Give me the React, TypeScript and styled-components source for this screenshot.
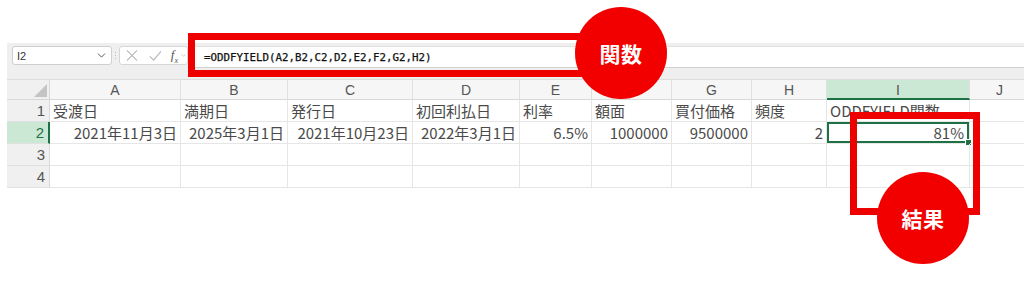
import React from "react";
import styled, { createGlobalStyle } from "styled-components";
import { ChevronDown } from "lucide-react";

const Global = createGlobalStyle`
  html, body { margin: 0; padding: 0; background: #fff; }
  body { font-family: "Noto Sans CJK JP", "Noto Sans", sans-serif; width: 1024px; height: 284px; overflow: hidden; }
`;

const Page = styled.div`
  position: relative;
  width: 1024px;
  height: 284px;
  padding: 43px 0 0 7px;
  box-sizing: border-box;
`;

const FormulaBand = styled.div`
  height: 37px;
  background: #efefef;
  display: flex;
  align-items: flex-start;
  padding: 3px 0 0 5px;
  box-sizing: border-box;
  gap: 3px;
  border-bottom: 1px solid #dcdcdc;
`;

const NameBox = styled.div`
  width: 100px;
  height: 19px;
  box-sizing: border-box;
  background: #fff;
  border: 1px solid #cfcfcf;
  border-radius: 3px;
  display: flex;
  align-items: center;
  justify-content: space-between;
  padding: 0 3px 0 4px;
  font-family: "Liberation Sans", sans-serif;
  font-size: 11px;
  color: #333;
`;

const Dots = styled.div`
  width: 1px;
  height: 19px;
  display: flex;
  flex-direction: column;
  justify-content: center;
  gap: 2px;
  & > span { width: 1px; height: 1px; background: #bbb; }
`;

const IconBox = styled.div`
  width: 69px;
  height: 19px;
  box-sizing: border-box;
  background: #fff;
  border: 1px solid #d6d6d6;
  border-radius: 3px;
  display: flex;
  align-items: center;
  padding: 0 0 0 6px;
  gap: 11px;
  color: #b4b4b4;
`;

const Fx = styled.span`
  font-family: "Liberation Serif", serif;
  font-style: italic;
  font-size: 13px;
  color: #555;
  display: flex;
  align-items: center;
  gap: 2px;
  margin-left: -2px;
  sub { font-size: 8px; }
`;

const FormulaInput = styled.div`
  flex: 1;
  height: 20px;
  background: #fff;
  border-top: 1px solid #e2e2e2;
  border-bottom: 1px solid #d0d0d0;
  margin-left: 3px;
  display: flex;
  align-items: center;
  padding-left: 10px;
  font-family: "DejaVu Sans Mono", monospace;
  font-size: 10.8px;
  font-weight: 400;
  color: #111;
  -webkit-text-stroke: 0.25px #111;
`;

const cols = [43, 131, 107, 125, 107, 72, 80, 80, 75, 143, 60];

const Sheet = styled.div`
  display: grid;
  grid-template-columns: ${cols.map((c) => `${c}px`).join(" ")};
  grid-template-rows: 20px 22px 22px 22px 22px;
`;

const Corner = styled.div`
  background: #f0f0f0;
  border-right: 1px solid #d8d8d8;
  border-bottom: 1px solid #d8d8d8;
  position: relative;
  &::after {
    content: "";
    position: absolute;
    right: 2px;
    bottom: 2px;
    width: 0;
    height: 0;
    border-left: 13px solid transparent;
    border-bottom: 13px solid #c4c4c4;
  }
`;

const ColHead = styled.div<{ $active?: boolean }>`
  background: ${(p) => (p.$active ? "#cbe8d5" : "#f6f6f6")};
  border-right: 1px solid #e0e0e0;
  border-bottom: ${(p) => (p.$active ? "2px solid #1e7145" : "1px solid #d8d8d8")};
  box-sizing: border-box;
  display: flex;
  align-items: center;
  justify-content: center;
  font-family: "Liberation Sans", sans-serif;
  font-size: 14px;
  color: #555;
  padding-top: 1px;
`;

const RowHead = styled.div<{ $active?: boolean }>`
  background: ${(p) => (p.$active ? "#cbe8d5" : "#f0f0f0")};
  border-right: ${(p) => (p.$active ? "2px solid #1e7145" : "1px solid #d8d8d8")};
  border-bottom: 1px solid #e0e0e0;
  box-sizing: border-box;
  display: flex;
  align-items: center;
  justify-content: flex-end;
  padding-right: 4px;
  font-family: "Liberation Sans", sans-serif;
  font-size: 15px;
  color: ${(p) => (p.$active ? "#1e7145" : "#555")};
`;

const Cell = styled.div<{ $align?: "left" | "right"; $selected?: boolean }>`
  border-right: 1px solid #e6e6e6;
  border-bottom: 1px solid #e6e6e6;
  box-sizing: border-box;
  display: flex;
  align-items: center;
  justify-content: ${(p) => (p.$align === "right" ? "flex-end" : "flex-start")};
  padding: 0 3px 0 3px;
  font-size: 15px;
  color: #4a4a4a;
  white-space: nowrap;
  overflow: visible;
  position: relative;
  ${(p) =>
    p.$selected &&
    `
    box-shadow: inset 0 0 0 2px #1e7145;
    padding-right: 5px;
    &::after {
      content: "";
      position: absolute;
      right: -3px;
      bottom: -3px;
      width: 5px;
      height: 5px;
      background: #1e7145;
      border: 1px solid #fff;
    }
  `}
`;

const RedFrame = styled.div<{ $l: number; $t: number; $w: number; $h: number }>`
  position: absolute;
  left: ${(p) => p.$l}px;
  top: ${(p) => p.$t}px;
  width: ${(p) => p.$w}px;
  height: ${(p) => p.$h}px;
  box-sizing: border-box;
  border: 7px solid #ee0000;
`;

const Badge = styled.div<{ $l: number; $t: number }>`
  position: absolute;
  left: ${(p) => p.$l}px;
  top: ${(p) => p.$t}px;
  width: 92px;
  height: 92px;
  border-radius: 50%;
  background: #f20000;
  color: #fff;
  display: flex;
  align-items: center;
  justify-content: center;
  font-family: "Noto Sans CJK JP", sans-serif;
  font-weight: 700;
  font-size: 21px;
  letter-spacing: 0.5px;
`;

const CancelIcon = () => (
  <svg width="13" height="13" viewBox="0 0 13 13" fill="none" stroke="currentColor" strokeWidth="1.1">
    <path d="M1 1 L12 12 M12 1 L1 12" />
  </svg>
);

const EnterIcon = () => (
  <svg width="14" height="12" viewBox="0 0 14 12" fill="none" stroke="currentColor" strokeWidth="1.1">
    <path d="M1 6.5 L5 10.5 L13 1" />
  </svg>
);

const letters = ["A", "B", "C", "D", "E", "F", "G", "H", "I", "J"];
const row1 = ["受渡日", "満期日", "発行日", "初回利払日", "利率", "額面", "買付価格", "頻度", "ODDFYIELD関数", ""];
const row2 = ["2021年11月3日", "2025年3月1日", "2021年10月23日", "2022年3月1日", "6.5%", "1000000", "9500000", "2", "81%", ""];

export default function App() {
  return (
    <>
      <Global />
      <Page>
        <FormulaBand>
          <NameBox>
            <span>I2</span>
            <ChevronDown size={13} color="#444" strokeWidth={1.6} />
          </NameBox>
          <Dots>
            <span />
            <span />
            <span />
          </Dots>
          <IconBox>
            <CancelIcon />
            <EnterIcon />
            <Fx>
              <span>
                f<sub>x</sub>
              </span>
              <ChevronDown size={7} color="#aaa" strokeWidth={2} />
            </Fx>
          </IconBox>
          <FormulaInput>=ODDFYIELD(A2,B2,C2,D2,E2,F2,G2,H2)</FormulaInput>
        </FormulaBand>
        <Sheet>
          <Corner />
          {letters.map((l) => (
            <ColHead key={l} $active={l === "I"}>
              {l}
            </ColHead>
          ))}
          <RowHead>1</RowHead>
          {row1.map((t, i) => (
            <Cell key={`r1-${i}`} $align="left">
              {t}
            </Cell>
          ))}
          <RowHead $active>2</RowHead>
          {row2.map((t, i) => (
            <Cell key={`r2-${i}`} $align="right" $selected={i === 8}>
              {t}
            </Cell>
          ))}
          <RowHead>3</RowHead>
          {letters.map((l) => (
            <Cell key={`r3-${l}`} />
          ))}
          <RowHead>4</RowHead>
          {letters.map((l) => (
            <Cell key={`r4-${l}`} />
          ))}
        </Sheet>
        <RedFrame $l={188} $t={33} $w={410} $h={44} />
        <Badge $l={575} $t={7}>関数</Badge>
        <RedFrame $l={850} $t={112} $w={130} $h={103} />
        <Badge $l={877} $t={172}>結果</Badge>
      </Page>
    </>
  );
}
